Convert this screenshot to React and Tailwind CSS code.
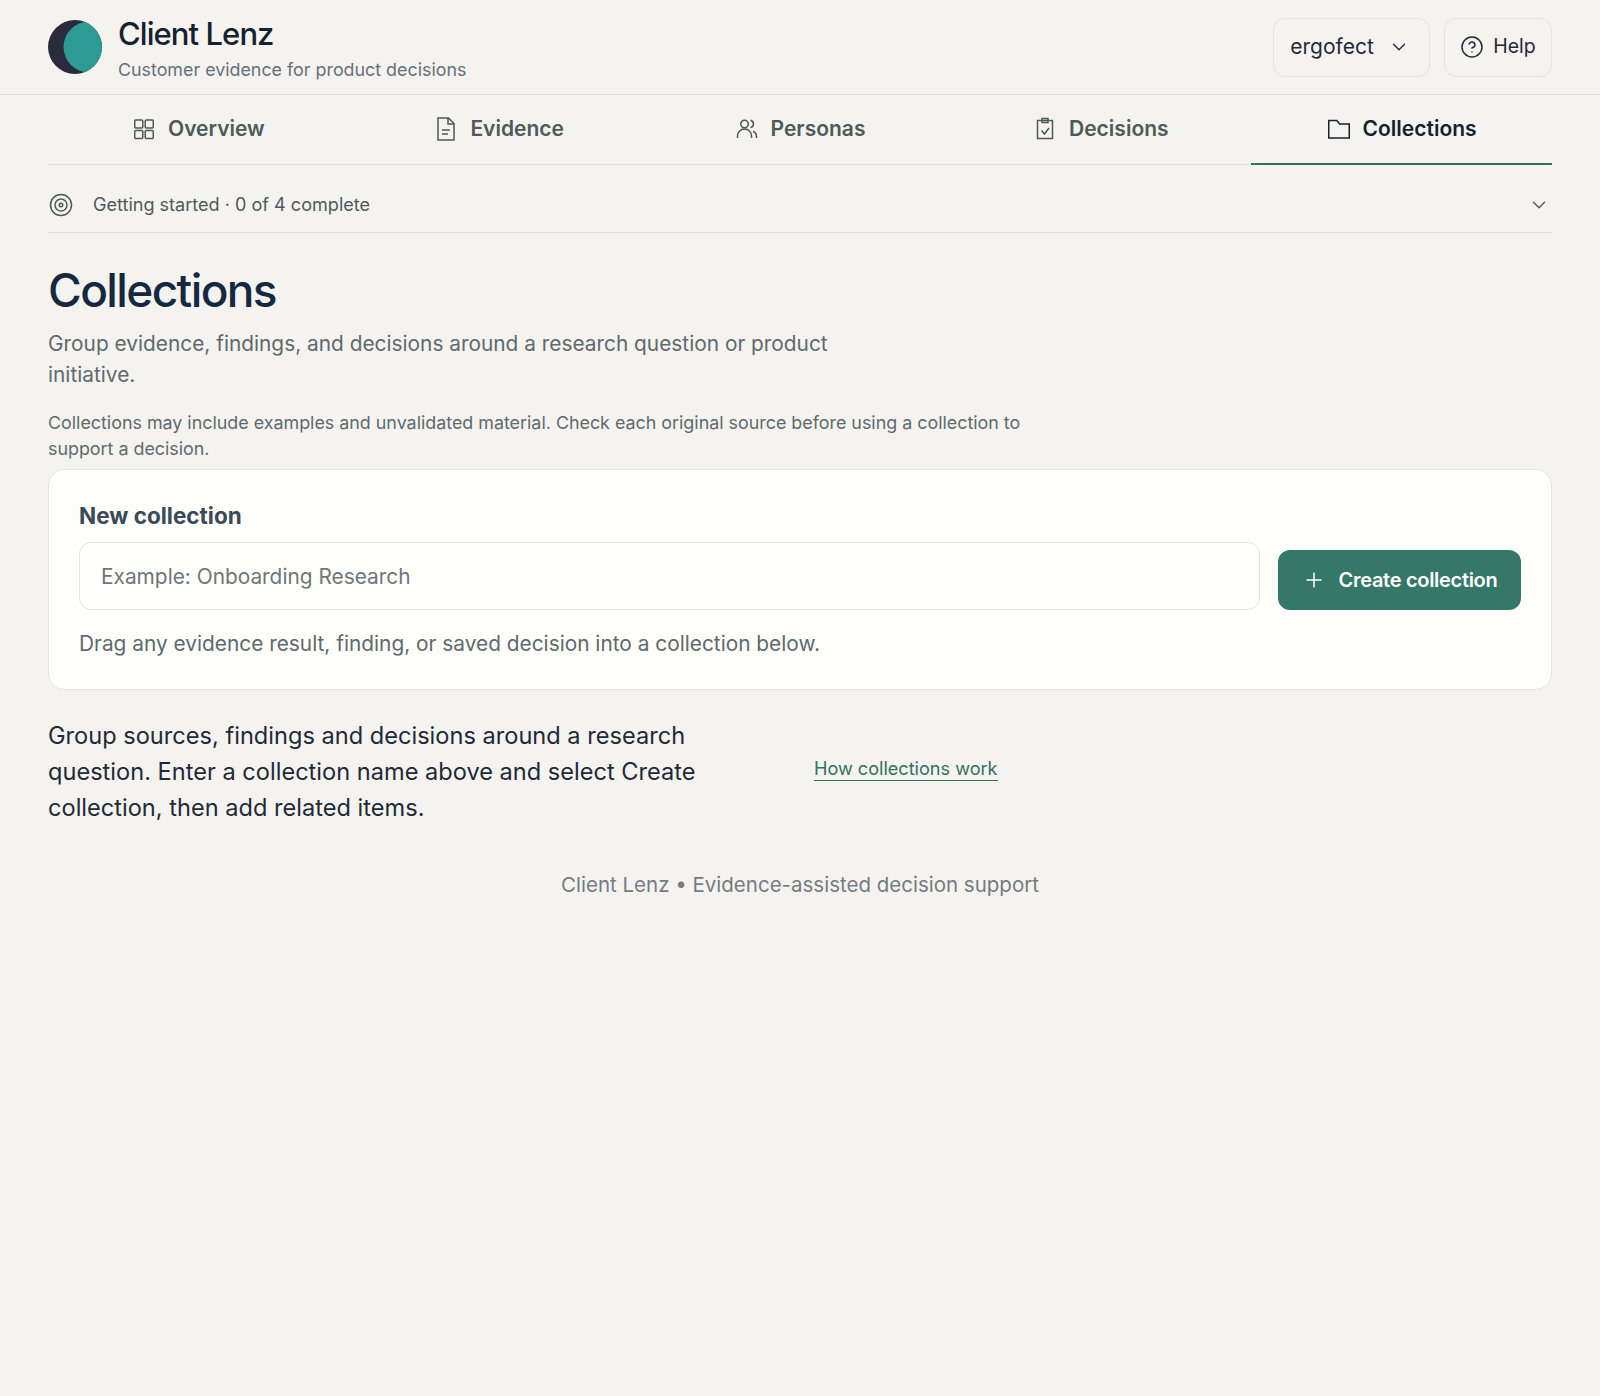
import React from "react";
import { ChevronDown, CircleHelp, Plus } from "lucide-react";

// tab icons in the picture have square corners, lucide's are too round
const Icon = ({ children, className }) => (
  <svg viewBox="0 0 24 24" fill="none" stroke="currentColor" strokeWidth="1.5" className={className}>
    {children}
  </svg>
);

const OverviewIcon = (p) => (
  <Icon {...p}>
    <rect x="2.75" y="3" width="8" height="8" rx="1" />
    <rect x="13.25" y="3" width="8" height="8" rx="1" />
    <rect x="2.75" y="13.5" width="8" height="8" rx="1" />
    <rect x="13.25" y="13.5" width="8" height="8" rx="1" />
  </Icon>
);
const EvidenceIcon = (p) => (
  <Icon {...p}>
    <path d="M4 1h10.5L20 6.5V23H4z" />
    <path d="M14 1v6h6" />
    <path d="M8 13h8M8 17h6" />
  </Icon>
);
const PersonasIcon = (p) => (
  <Icon {...p}>
    <circle cx="9.5" cy="7" r="3.75" />
    <path d="M2.5 21v-2a7 7 0 0 1 14 0v2" />
    <path d="M15.5 3.2a3.8 3.8 0 0 1 0 7.4" />
    <path d="M18 14.2a6 6 0 0 1 3.5 5.3V21" />
  </Icon>
);
const DecisionsIcon = (p) => (
  <Icon {...p}>
    <path d="M4.5 3.5h15v18h-15z" />
    <rect x="9" y="1.5" width="6" height="4" />
    <path d="M8.5 13.5l3 3.5 4.5-6" />
  </Icon>
);
const CollectionsIcon = (p) => (
  <Icon {...p}>
    <path d="M1.75 3.5h8l3 3.5h9.5v14H1.75z" />
  </Icon>
);
const TargetIcon = (p) => (
  <Icon {...p}>
    <circle cx="12" cy="12" r="10.5" />
    <circle cx="12" cy="12" r="6" />
    <circle cx="12" cy="12" r="1.75" />
  </Icon>
);

const tabs = [
  { label: "Overview", icon: OverviewIcon },
  { label: "Evidence", icon: EvidenceIcon },
  { label: "Personas", icon: PersonasIcon },
  { label: "Decisions", icon: DecisionsIcon },
  { label: "Collections", icon: CollectionsIcon, active: true },
];

const Logo = () => (
  <svg width="54" height="54" viewBox="0 0 54 54" className="shrink-0">
    <defs>
      <clipPath id="logo-clip">
        <circle cx="27" cy="27" r="27" />
      </clipPath>
    </defs>
    <circle cx="27" cy="27" r="27" fill="#2b2b3d" />
    <circle cx="41" cy="27" r="25.5" fill="#2d9a94" clipPath="url(#logo-clip)" />
  </svg>
);

export default function App() {
  return (
    <div className="min-h-[1396px] bg-[#f4f3f0] font-['Inter',sans-serif] text-[#1f2a37]">
      {/* Header */}
      <header className="h-[95px] px-12 flex items-center justify-between border-b border-[#e0dfdb]">
        <div className="flex items-center gap-4">
          <Logo />
          <div className="pt-[4px]">
            <div className="text-[31px] leading-[36px] font-medium tracking-[-0.03em] text-[#14222e]">Client Lenz</div>
            <div className="text-[17.85px] leading-[24px] mt-[6px] text-[#66707a]">Customer evidence for product decisions</div>
          </div>
        </div>
        <div className="flex items-center gap-[14px]">
          <button className="h-[59px] w-[157px] pr-[3px] flex items-center justify-center gap-[14px] rounded-xl border border-[#e5e4e0] text-[21px] text-[#1f2a37]">
            ergofect
            <ChevronDown className="w-[22px] h-[22px]" strokeWidth={1.5} />
          </button>
          <button className="h-[59px] w-[108px] flex items-center justify-center gap-[9px] rounded-xl border border-[#e5e4e0] text-[19.5px] text-[#1f2a37]">
            <CircleHelp className="w-6 h-6" strokeWidth={1.5} />
            Help
          </button>
        </div>
      </header>

      <main className="px-12">
        {/* Tabs */}
        <nav className="grid grid-cols-5 h-[70px] border-b border-[#dfded9]">
          {tabs.map((t) => (
            <div
              key={t.label}
              className={
                t.active
                  ? "flex items-center justify-center gap-3 h-[70px] border-b-2 border-[#33705f] text-[21px] font-semibold text-[#14222e]"
                  : "flex items-center justify-center gap-3 h-[70px] border-b-2 border-transparent text-[21px] font-semibold text-[#4c5a59]"
              }
            >
              <t.icon className="w-6 h-6" />
              {t.label}
            </div>
          ))}
        </nav>

        {/* Getting started */}
        <div className="h-[68px] pt-[12px] flex items-center justify-between border-b border-[#e0dfdb]">
          <div className="flex items-center gap-[20px] pl-[1px]">
            <TargetIcon className="w-6 h-6 text-[#4c5a59]" />
            <span className="text-[18.07px] text-[#4e5a5a]">Getting started · 0 of 4 complete</span>
          </div>
          <ChevronDown className="w-[22px] h-[22px] mr-[2px] text-[#4c5a59]" strokeWidth={1.5} />
        </div>

        <h1 className="mt-[29px] text-[46px] leading-[56px] font-medium tracking-[-0.035em] text-[#14293f]">Collections</h1>
        <p className="mt-[10px] max-w-[800px] text-[20.85px] leading-[31px] text-[#5e6a6c]">
          Group evidence, findings, and decisions around a research question or product initiative.
        </p>
        <p className="mt-[20px] max-w-[1000px] text-[17.87px] leading-[26px] text-[#5e6a6c]">
          Collections may include examples and unvalidated material. Check each original source before using a collection to support a decision.
        </p>

        {/* New collection card */}
        <section className="mt-[7px] h-[221px] px-[30px] pt-[31px] bg-[#fefefb] border border-[#e5e4e0] rounded-2xl">
          <h2 className="text-[22.5px] leading-[30px] font-bold text-[#3a4a56]">New collection</h2>
          <div className="mt-[11px] flex items-end gap-[18px]">
            <input
              placeholder="Example: Onboarding Research"
              className="flex-1 h-[68px] px-[21px] bg-[#fefefb] border border-[#e5e4e0] rounded-xl text-[20.85px] placeholder:text-[#6e7679] outline-none"
            />
            <button className="w-[243px] h-[60px] flex items-center justify-center gap-[13px] rounded-xl bg-[#35786a] text-white text-[20px] font-semibold tracking-[-0.015em]">
              <Plus className="w-6 h-6" strokeWidth={1.5} />
              Create collection
            </button>
          </div>
          <p className="mt-[19px] text-[20.85px] leading-[30px] text-[#5e6a6c]">
            Drag any evidence result, finding, or saved decision into a collection below.
          </p>
        </section>

        {/* Empty state */}
        <div className="mt-[28px] flex items-center gap-[111px]">
          <p className="w-[655px] text-[23.6px] leading-[36px] text-[#1f2a37]">
            Group sources, findings and decisions around a research question. Enter a collection name above and select Create collection, then add related items.
          </p>
          <a href="#" className="text-[18.1px] leading-[24px] text-[#33705f] border-b border-[#33705f] -mt-[8px]">How collections work</a>
        </div>

        <footer className="mt-[44px] text-center text-[20.5px] leading-[30px] text-[#747c80]">
          Client Lenz • Evidence-assisted decision support
        </footer>
      </main>
    </div>
  );
}
